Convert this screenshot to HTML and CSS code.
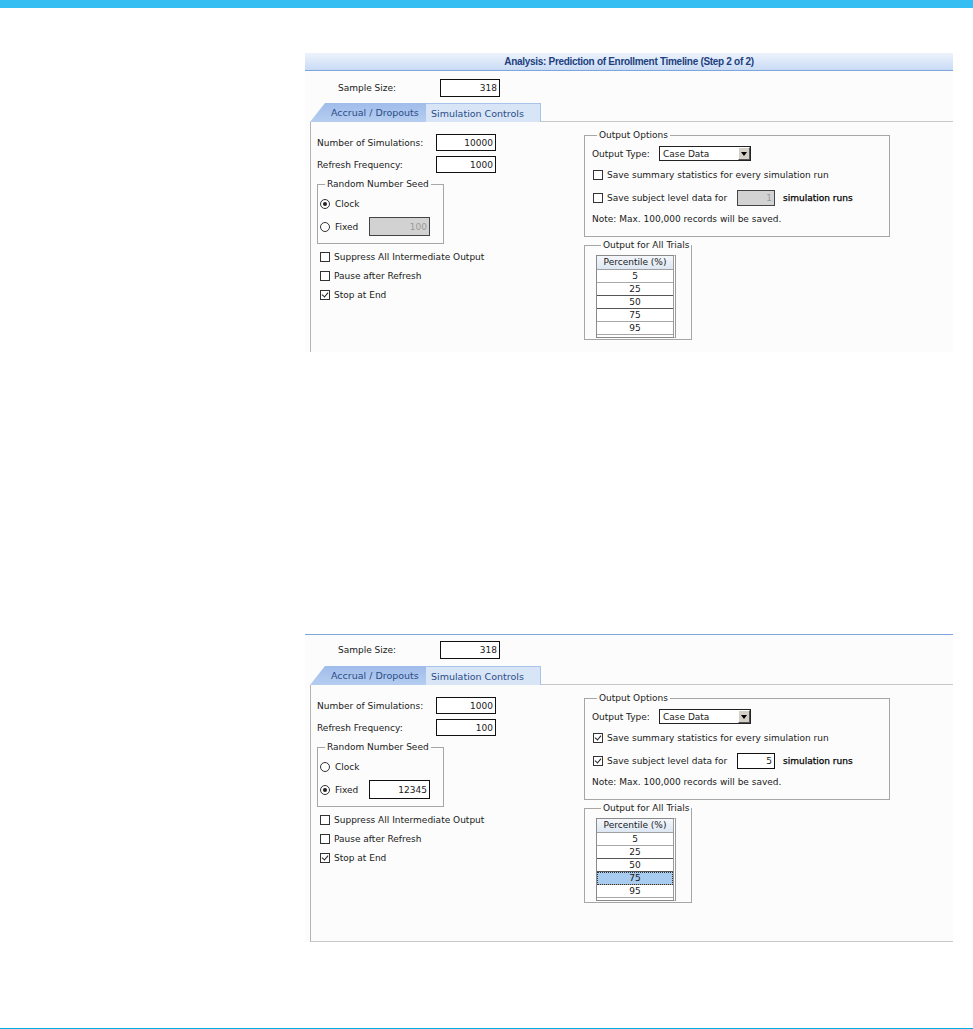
FILE: index.html
```html
<!DOCTYPE html>
<html lang="en">
<head>
  <meta charset="UTF-8">
  <title>Prediction of Enrollment Timeline</title>
  <link rel="stylesheet" href="styles.css">
</head>
<body>
  <div class="topbar"></div>

  <!-- Step 2 dialog, default values -->
  <section class="dialog">
    <div class="title">Analysis: Prediction of Enrollment Timeline (Step 2 of 2)</div>
    <div class="sample">
      <span class="sample-label">Sample Size:</span>
      <input class="box sample-box" type="text" value="318">
    </div>
    <div class="tabs">
      <div class="tab tab-accrual">Accrual / Dropouts</div>
      <div class="tab tab-sim">Simulation Controls</div>
      <div class="tab-rest"></div>
    </div>
    <div class="tab-body cropped">
      <div class="col-left">
        <div class="field">
          <span class="field-label">Number of Simulations:</span>
          <input class="box num-box" type="text" value="10000">
        </div>
        <div class="field">
          <span class="field-label">Refresh Frequency:</span>
          <input class="box num-box" type="text" value="1000">
        </div>
        <fieldset class="group seed">
          <legend>Random Number Seed</legend>
          <div class="radio-row"><span class="radio on"></span>Clock</div>
          <div class="radio-row fixed-row">
            <span class="radio"></span><span class="fixed-label">Fixed</span>
            <input class="box seed-box disabled" type="text" value="100">
          </div>
        </fieldset>
        <div class="check-row"><span class="check"></span>Suppress All Intermediate Output</div>
        <div class="check-row"><span class="check"></span>Pause after Refresh</div>
        <div class="check-row"><span class="check on"></span>Stop at End</div>
      </div>

      <div class="col-right">
        <fieldset class="group output">
          <legend>Output Options</legend>
          <div class="type-row">
            <span class="type-label">Output Type:</span>
            <div class="select"><span>Case Data</span><span class="arrow"></span></div>
          </div>
          <div class="check-row opt"><span class="check"></span>Save summary statistics for every simulation run</div>
          <div class="check-row opt subject-row">
            <span class="check"></span><span class="subject-label">Save subject level data for</span>
            <input class="box runs-box disabled" type="text" value="1">
            <span class="runs">simulation runs</span>
          </div>
          <div class="note">Note: Max. 100,000 records will be saved.</div>
        </fieldset>
        <fieldset class="group trials">
          <legend>Output for All Trials</legend>
          <div class="pct-table">
            <div class="pct-head">Percentile (%)</div>
            <div class="pct-row">5</div>
            <div class="pct-row dark">25</div>
            <div class="pct-row dark">50</div>
            <div class="pct-row">75</div>
            <div class="pct-row">95</div>
          </div>
        </fieldset>
      </div>
    </div>
  </section>

  <!-- same dialog, edited values -->
  <section class="dialog second">
    <div class="sample">
      <span class="sample-label">Sample Size:</span>
      <input class="box sample-box" type="text" value="318">
    </div>
    <div class="tabs">
      <div class="tab tab-accrual">Accrual / Dropouts</div>
      <div class="tab tab-sim">Simulation Controls</div>
      <div class="tab-rest"></div>
    </div>
    <div class="tab-body full">
      <div class="col-left">
        <div class="field">
          <span class="field-label">Number of Simulations:</span>
          <input class="box num-box" type="text" value="1000">
        </div>
        <div class="field">
          <span class="field-label">Refresh Frequency:</span>
          <input class="box num-box" type="text" value="100">
        </div>
        <fieldset class="group seed">
          <legend>Random Number Seed</legend>
          <div class="radio-row"><span class="radio"></span>Clock</div>
          <div class="radio-row fixed-row">
            <span class="radio on"></span><span class="fixed-label">Fixed</span>
            <input class="box seed-box" type="text" value="12345">
          </div>
        </fieldset>
        <div class="check-row"><span class="check"></span>Suppress All Intermediate Output</div>
        <div class="check-row"><span class="check"></span>Pause after Refresh</div>
        <div class="check-row"><span class="check on"></span>Stop at End</div>
      </div>

      <div class="col-right">
        <fieldset class="group output">
          <legend>Output Options</legend>
          <div class="type-row">
            <span class="type-label">Output Type:</span>
            <div class="select"><span>Case Data</span><span class="arrow"></span></div>
          </div>
          <div class="check-row opt"><span class="check on"></span>Save summary statistics for every simulation run</div>
          <div class="check-row opt subject-row">
            <span class="check on"></span><span class="subject-label">Save subject level data for</span>
            <input class="box runs-box" type="text" value="5">
            <span class="runs">simulation runs</span>
          </div>
          <div class="note">Note: Max. 100,000 records will be saved.</div>
        </fieldset>
        <fieldset class="group trials">
          <legend>Output for All Trials</legend>
          <div class="pct-table">
            <div class="pct-head">Percentile (%)</div>
            <div class="pct-row">5</div>
            <div class="pct-row dark">25</div>
            <div class="pct-row dark">50</div>
            <div class="pct-row selected">75</div>
            <div class="pct-row">95</div>
          </div>
        </fieldset>
      </div>
    </div>
  </section>

  <div class="bottom-line"></div>
</body>
</html>
```

FILE: styles.css
```css
body {
  margin: 0;
  padding: 0;
  background-color: #fff;
  color: #1a1a1a;
  font-family: "DejaVu Sans", Verdana, sans-serif;
  font-size: 9px;
}

.topbar {
  height: 8px;
  background-color: #35BEF2;
}

.bottom-line {
  height: 1px;
  margin-top: 86px;
  background-color: #00ADE6;
}

.dialog {
  width: 648px;
  margin: 45px 0 0 305px;
  background-color: #FCFCFC;
}

.dialog.second {
  margin-top: 282px;
  border-top: 1px solid #7FA6DC;
}

.title {
  height: 17px;
  line-height: 17px;
  border-bottom: 1px solid #7FA6DC;
  background: linear-gradient(#EDF3FC, #C9DBF5);
  color: #1D3F7E;
  font-family: "Liberation Sans", Arial, sans-serif;
  font-size: 10px;
  font-weight: bold;
  letter-spacing: -0.3px;
  text-align: center;
}

/* sample size row */
.sample {
  display: flex;
  align-items: center;
  padding: 8px 0 0 33px;
  height: 18px;
}

.dialog.second .sample {
  padding-top: 6px;
}

.sample-label {
  width: 102px;
}

.box {
  box-sizing: border-box;
  margin: 0;
  padding: 0 2px;
  border: 1px solid #111;
  background-color: #fff;
  color: #1a1a1a;
  font-family: "DejaVu Sans", Verdana, sans-serif;
  font-size: 9px;
  text-align: right;
  outline: none;
}

.box.disabled {
  background-color: #D2D2D2;
  border-color: #444;
  color: #9a9a9a;
}

.sample-box {
  width: 60px;
  height: 18px;
}

/* tabs */
.tabs {
  display: flex;
  height: 19px;
  margin-top: 6px;
  padding-left: 5px;
}

.dialog.second .tabs {
  margin-top: 7px;
}

.tab {
  box-sizing: border-box;
  height: 19px;
  line-height: 19px;
  color: #2B4C88;
  font-size: 9.5px;
}

.tab-accrual {
  width: 116px;
  padding-left: 21px;
  background: linear-gradient(#A0BCEA, #B5CDF0);
  clip-path: polygon(15px 0, 100% 0, 100% 100%, 0 100%);
}

.tab-sim {
  width: 115px;
  padding-left: 5px;
  background-color: #D7E5F7;
  border-top: 1px solid #A9C4EC;
  border-right: 1px solid #A9C4EC;
}

.tab-rest {
  flex: 1;
  border-bottom: 1px solid #C8C8C8;
}

/* tab content */
.tab-body {
  display: grid;
  grid-template-columns: 267px 306px;
  margin-left: 5px;
  padding-left: 6px;
  border-left: 1px solid #B4B4B4;
}

.tab-body.cropped {
  height: 230px;
  overflow: hidden;
}

.tab-body.full {
  height: 256px;
  border-bottom: 1px solid #C8C8C8;
}

.col-left {
  padding-top: 12px;
}

.col-right {
  padding-top: 7px;
}

.field {
  display: flex;
  align-items: center;
  height: 17px;
  margin-bottom: 5px;
}

.field-label {
  width: 119px;
}

.num-box {
  width: 60px;
  height: 17px;
}

.group {
  margin: 0;
  padding: 0 5px 7px 2px;
  border: 1px solid #A6A6A6;
  min-width: 0;
}

.group legend {
  margin-left: 5px;
  padding: 0 2px;
  line-height: 12px;
  color: #222;
  white-space: nowrap;
}

.seed {
  width: 127px;
  box-sizing: border-box;
  margin-top: 2px;
}

.radio-row {
  display: flex;
  align-items: center;
  height: 18px;
  margin-top: 5px;
}

.fixed-row {
  height: 19px;
  margin-top: 4px;
}

.radio {
  box-sizing: border-box;
  display: inline-flex;
  align-items: center;
  justify-content: center;
  width: 10px;
  height: 10px;
  margin-right: 5px;
  border: 1px solid #333;
  border-radius: 50%;
  background-color: #fff;
}

.radio.on::after {
  content: "";
  width: 4px;
  height: 4px;
  border-radius: 50%;
  background-color: #222;
}

.fixed-label {
  width: 34px;
}

.seed-box {
  width: 61px;
  height: 19px;
}

.check-row {
  display: flex;
  align-items: center;
  height: 19px;
  padding-left: 3px;
}

.col-left .check-row:nth-of-type(3) {
  margin-top: 3px;
}

.check {
  box-sizing: border-box;
  position: relative;
  width: 10px;
  height: 10px;
  margin-right: 4px;
  border: 1px solid #333;
  background-color: #fff;
}

.check.on::after {
  content: "";
  position: absolute;
  left: 2px;
  top: 0;
  width: 3px;
  height: 5px;
  border-right: 1.5px solid #222;
  border-bottom: 1.5px solid #222;
  transform: rotate(40deg);
}

/* output options */
.output {
  box-sizing: border-box;
  width: 306px;
  padding: 0 6px 9px 7px;
}

.type-row {
  display: flex;
  align-items: center;
  height: 15px;
  margin-top: 5px;
}

.type-label {
  width: 67px;
}

.select {
  box-sizing: border-box;
  display: flex;
  align-items: center;
  justify-content: space-between;
  width: 92px;
  height: 15px;
  padding-left: 3px;
  border: 1px solid #222;
  background-color: #fff;
}

.arrow {
  box-sizing: border-box;
  display: flex;
  align-items: center;
  justify-content: center;
  width: 12px;
  height: 13px;
  background-color: #D4D0C8;
  border: 1px solid;
  border-color: #fff #555 #555 #fff;
}

.arrow::after {
  content: "";
  border-left: 3px solid transparent;
  border-right: 3px solid transparent;
  border-top: 4px solid #000;
}

.check-row.opt {
  height: 18px;
  margin-top: 5px;
  padding-left: 1px;
}

.subject-row {
  height: 16px;
}

.subject-label {
  width: 130px;
}

.runs-box {
  width: 38px;
  height: 16px;
}

.runs {
  margin-left: 8px;
  color: #000;
  -webkit-text-stroke: 0.25px #000;
}

.note {
  height: 16px;
  line-height: 16px;
  margin-top: 4px;
}

/* percentile table */
.trials {
  box-sizing: border-box;
  width: 108px;
  margin-top: 2px;
  padding: 0 0 1px 11px;
}

.pct-table {
  box-sizing: border-box;
  width: 80px;
  margin-top: 4px;
  padding-bottom: 2px;
  border: 1px solid #8A8A8A;
  border-right: 3px double #9A9A9A;
  background-color: #fff;
  text-align: center;
}

.pct-head {
  height: 13px;
  line-height: 13px;
  border-bottom: 1px solid #A0A0A0;
  background: linear-gradient(#F4F7FB, #DDE7F3);
}

.pct-row {
  height: 12px;
  line-height: 12px;
  border-bottom: 1px solid #A8A8A8;
}

.pct-row.dark {
  border-bottom-color: #555;
}

.pct-row.selected {
  background-color: #A8CBF0;
  outline: 1px dotted #333;
  outline-offset: -1px;
}
```
